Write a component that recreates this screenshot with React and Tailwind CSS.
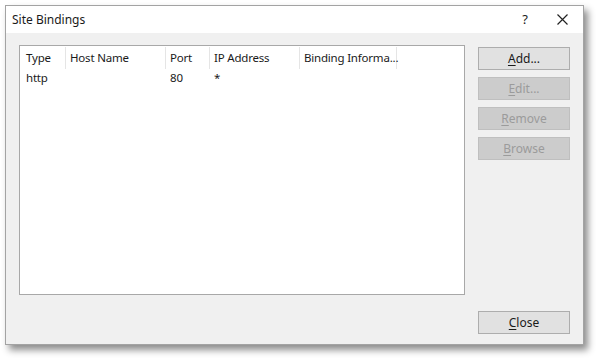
import React from "react";

const columns = [
  { label: "Type", w: "w-[46px]", pad: "pl-[6px]" },
  { label: "Host Name", w: "w-[100px]", pad: "pl-[4px]" },
  { label: "Port", w: "w-[44px]", pad: "pl-[4px]" },
  { label: "IP Address", w: "w-[90px]", pad: "pl-[4px]" },
  { label: "Binding Informa...", w: "w-[97px]", pad: "pl-[4px]" },
];

const rows = [["http", "", "80", "*", ""]];

const DialogButton = ({ label, accessKey, disabled }) => {
  const rest = label.slice(1);
  return (
    <button
      disabled={disabled}
      className={
        "w-[92px] h-[23px] border text-[12px] leading-none flex items-center justify-center " +
        (disabled
          ? "bg-[#cccccc] border-[#bfbfbf] text-[#9b9b9b]"
          : "bg-[#e1e1e1] border-[#adadad] text-[#1a1a1a]")
      }
    >
      <span>
        <span className="underline underline-offset-2">{accessKey}</span>
        {rest}
      </span>
    </button>
  );
};

const App = () => {
  return (
    <div
      className="w-[599px] h-[361px] bg-white pt-[5px] pl-[5px]"
      style={{ fontFamily: '"Noto Sans", "Open Sans", sans-serif' }}
    >
      <div className="w-[579px] h-[340px] border border-[#a3a3a3] flex flex-col shadow-[4px_5px_7px_rgba(0,0,0,0.45)]">
        {/* title bar */}
        <div className="h-[27px] bg-white flex items-center pl-[6px] pr-[14px] text-[12px] text-[#1a1a1a]">
          <span className="flex-1">Site Bindings</span>
          <span className="w-[20px] text-center mr-[22px] text-[13px]">?</span>
          <svg width="11" height="11" viewBox="0 0 11 11" className="mr-[1px]">
            <path d="M0.5 0.5 L10.5 10.5 M10.5 0.5 L0.5 10.5" stroke="#222" strokeWidth="1.2" />
          </svg>
        </div>

        {/* body */}
        <div className="flex-1 bg-[#f0f0f0] flex pl-[13px] pt-[12px] pr-[13px] pb-[10px]">
          <div className="flex flex-col flex-1">
            <div className="w-[446px] h-[250px] bg-white border border-[#a8a8a8] text-[11.5px] tracking-[-0.2px] text-[#1a1a1a]">
              <div className="flex h-[22px] mt-[1px]">
                {columns.map((c) => (
                  <div
                    key={c.label}
                    className={c.w + " " + c.pad + " border-r border-[#e5e5e5] flex items-center whitespace-nowrap"}
                  >
                    {c.label}
                  </div>
                ))}
              </div>
              {rows.map((r, i) => (
                <div key={i} className="flex h-[18px]">
                  {r.map((cell, j) => (
                    <div key={j} className={columns[j].w + " " + columns[j].pad + " flex items-center"}>
                      {cell}
                    </div>
                  ))}
                </div>
              ))}
            </div>
          </div>

          <div className="w-[92px] flex flex-col justify-between pt-[2px]">
            <div className="flex flex-col gap-[7px]">
              <DialogButton label="Add..." accessKey="A" />
              <DialogButton label="Edit..." accessKey="E" disabled />
              <DialogButton label="Remove" accessKey="R" disabled />
              <DialogButton label="Browse" accessKey="B" disabled />
            </div>
            <DialogButton label="Close" accessKey="C" />
          </div>
        </div>
      </div>
    </div>
  );
};

export default App;
